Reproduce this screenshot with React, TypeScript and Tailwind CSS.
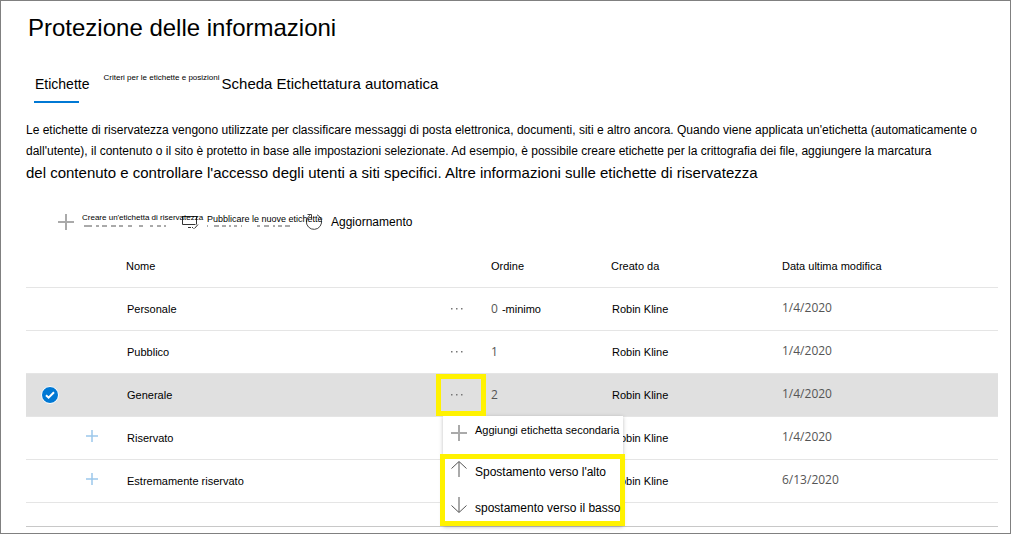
import { useState } from "react";

type Label = {
  name: string;
  order: string;
  note?: string;
  author: string;
  modified: string;
  expandable?: boolean;
};

const labels: Label[] = [
  { name: "Personale", order: "0", note: "-minimo", author: "Robin Kline", modified: "1/4/2020" },
  { name: "Pubblico", order: "1", author: "Robin Kline", modified: "1/4/2020" },
  { name: "Generale", order: "2", author: "Robin Kline", modified: "1/4/2020" },
  { name: "Riservato", order: "", author: "Robin Kline", modified: "1/4/2020", expandable: true },
  { name: "Estremamente riservato", order: "", author: "Robin Kline", modified: "6/13/2020", expandable: true },
];

function PlusIcon({ className }: { className: string }) {
  return (
    <svg viewBox="0 0 16 16" className={className} fill="none" stroke="currentColor" strokeWidth="2" aria-hidden="true">
      <path d="M8 0v16M0 8h16" />
    </svg>
  );
}

function ArrowIcon({ down = false }: { down?: boolean }) {
  return (
    <svg viewBox="0 0 16 16" className="size-4 shrink-0 text-[#555]" fill="none" stroke="currentColor" aria-hidden="true">
      <path d={down ? "M8 0v15" : "M8 16V1"} stroke="#aaa" strokeWidth="2" />
      <path d={down ? "M.5 8.500l7.500 7 7.500-7" : "M.5 7.500l7.500-7 7.500 7"} />
    </svg>
  );
}

function PublishIcon() {
  return (
    <svg viewBox="0 0 18 16" className="h-4 w-[18px] shrink-0 text-[#333]" fill="none" stroke="currentColor" aria-hidden="true">
      <path d="M1.500 3v7.500h13M1 2.500h15M15.500 2v8.500" />
      <path d="M7 13.500h3M11 13l1.500 1.500M13.500 14.500l3.500-4" />
    </svg>
  );
}

function RefreshIcon() {
  return (
    <svg viewBox="0 0 18 18" className="size-[18px] shrink-0 text-[#444]" fill="none" stroke="currentColor" aria-hidden="true">
      <path d="M12 1.800A7.600 7.600 0 1 1 5 2.300" />
      <path d="M2.500 1.500h4v4" />
    </svg>
  );
}

function Residue({ className, d }: { className: string; d: string }) {
  return (
    <svg viewBox="0 0 86 2" className={className} fill="none" stroke="#555" aria-hidden="true">
      <path d={d} />
    </svg>
  );
}

function RowMenu() {
  return (
    <div
      role="menu"
      className="absolute top-full left-px z-10 w-[180px] bg-white text-left text-[12px] text-black shadow-[0_1px_4px_rgba(0,0,0,0.25)]"
    >
      <button role="menuitem" className="flex h-[38px] w-full items-center gap-2 pl-2 text-[11px] whitespace-nowrap">
        <PlusIcon className="mb-1 size-4 shrink-0 text-[#aaa]" />
        <span className="pb-2">Aggiungi etichetta secondaria</span>
      </button>
      <div className="-mx-[3px] h-[72px] w-[185px] border-5 border-[#fff200] pl-1.5">
        <button role="menuitem" className="flex h-5 w-full items-center gap-2 whitespace-nowrap">
          <ArrowIcon />
          <span className="pt-1.5">Spostamento verso l'alto</span>
        </button>
        <button role="menuitem" className="mt-4 flex h-5 w-full items-center gap-2 whitespace-nowrap">
          <ArrowIcon down />
          <span className="pt-1.5">spostamento verso il basso</span>
        </button>
      </div>
    </div>
  );
}

export default function App() {
  const [selected, setSelected] = useState("Generale");

  return (
    <main className="min-h-screen border border-[#808080] bg-white pr-3 pb-[6px] pl-[25px] font-['Liberation_Sans',Arial,sans-serif] text-black">
      <h1 className="pt-[11px] pl-0.5 text-[24px] leading-8">Protezione delle informazioni</h1>

      <nav className="mt-7 flex h-8 items-start pl-2 whitespace-nowrap">
        <a href="#etichette" aria-current="page" className="text-[14px] leading-6">
          <span className="pl-px">Etichette</span>
          <span className="mt-[5px] block h-0.5 w-[45px] bg-[#0078d4]" />
        </a>
        <a href="#criteri" className="ml-3.5 text-[8px] leading-3">
          Criteri per le etichette e posizioni
        </a>
        <a href="#automatica" className="ml-0.5 text-[15px] leading-6">
          Scheda Etichettatura automatica
        </a>
      </nav>

      <p className="mt-4 text-[12px] leading-[21px]">
        Le etichette di riservatezza vengono utilizzate per classificare messaggi di posta elettronica, documenti, siti e
        altro ancora. Quando viene applicata un'etichetta (automaticamente o
        <br />
        dall'utente), il contenuto o il sito è protetto in base alle impostazioni selezionate. Ad esempio, è possibile
        creare etichette per la crittografia dei file, aggiungere la marcatura
        <br />
        <span className="text-[15px]">
          del contenuto e controllare l'accesso degli utenti a siti specifici. Altre informazioni sulle etichette di
          riservatezza
        </span>
      </p>

      <div role="toolbar" aria-label="Azioni etichette" className="mt-[25px] flex h-6 items-center pl-8 whitespace-nowrap">
        <button className="flex h-6 items-center gap-2 text-[8px]">
          <PlusIcon className="size-4 shrink-0 text-[#aaa]" />
          <span className="relative w-[99px] pb-2 text-left">
            Creare un'etichetta di riservatezza
            <Residue
              className="absolute top-[13px] left-0 h-0.5 w-[86px]"
              d="M2 1h8M14 1h3M20 1h5M29 1h5M37 1h4M46 1h4M57 1h4M68 1h3M75 1h4M82 1h2"
            />
          </span>
        </button>
        <button className="flex h-6 items-center gap-2 text-[9px]">
          <PublishIcon />
          <span className="relative w-[98px] pb-1 text-left">
            Pubblicare le nuove etichette
            <Residue
              className="absolute top-3 left-0 h-0.5 w-[86px]"
              d="M0 1h1M7 1h5M15 1h4M22 1h2M27 1h3M34 1h1M50 1h3M57 1h5M66 1h2M71 1h4M78 1h5"
            />
          </span>
        </button>
        <button className="flex h-6 items-center gap-2 text-[12px]">
          <RefreshIcon />
          Aggiornamento
        </button>
      </div>

      <div className="border-b border-[#c8c8c8] pb-[23px]">
        <table className="mt-2.5 w-full table-fixed border-collapse text-left text-[11px]">
          <colgroup>
            <col className="w-[52px]" />
            <col className="w-12" />
            <col />
            <col className="w-[49px]" />
            <col className="w-[120px]" />
            <col className="w-[171px]" />
            <col className="w-[216px]" />
          </colgroup>
          <thead>
            <tr className="h-[43px] border-b border-[#e5e5e5]">
              <th aria-label="Selezione" />
              <th aria-label="Espandi" />
              <th className="p-0 pt-0.5 font-normal">Nome</th>
              <th aria-label="Azioni" />
              <th className="p-0 pt-0.5 font-normal">Ordine</th>
              <th className="p-0 pt-0.5 font-normal">Creato da</th>
              <th className="p-0 pt-0.5 font-normal">Data ultima modifica</th>
            </tr>
          </thead>
          <tbody>
            {labels.map((label) => {
              const active = label.name === selected;
              return (
                <tr
                  key={label.name}
                  onClick={() => setSelected(label.name)}
                  className={active ? "h-[43px] border-b border-[#e5e5e5] bg-[#e0e0e0]" : "h-[43px] border-b border-[#e5e5e5]"}
                >
                  <td className="p-0 pl-[15px]">
                    {active && (
                      <label className="grid size-[18px] place-items-center">
                        <input
                          type="checkbox"
                          checked
                          readOnly
                          aria-label={`Seleziona ${label.name}`}
                          className="col-start-1 row-start-1 size-[18px] appearance-none rounded-full border border-white bg-[#0078d4]"
                        />
                        <svg viewBox="0 0 10 10" className="pointer-events-none col-start-1 row-start-1 size-2.5" fill="none" stroke="white" strokeWidth="2" aria-hidden="true">
                          <path d="M1 5.200l2.600 2.500L9 2.300" />
                        </svg>
                      </label>
                    )}
                  </td>
                  <td className="p-0 pb-1 pl-2">
                    {label.expandable && (
                      <button aria-label={`Espandi ${label.name}`} className="block">
                        <PlusIcon className="size-3 text-[#9cc8eb]" />
                      </button>
                    )}
                  </td>
                  <td className="p-0 pt-0.5 pl-px">{label.name}</td>
                  <td className="relative p-0">
                    <button aria-label={`Altre azioni per ${label.name}`} className="flex h-4 items-center pl-[9px] text-[#777]">
                      <svg viewBox="0 0 12 2" className="h-0.5 w-3" fill="currentColor" aria-hidden="true">
                        <path d="M0 0h1.500v1.500H0zM5 0h1.500v1.500H5zM10 0h1.500v1.500H10z" />
                      </svg>
                    </button>
                    {active && (
                      <>
                        <span className="pointer-events-none absolute top-0 -left-1.5 z-20 h-[42px] w-[50px] border-5 border-[#fff200]" />
                        <RowMenu />
                      </>
                    )}
                  </td>
                  <td className="p-0">
                    <span className="mr-1 font-['Open_Sans',sans-serif] text-[12px] text-[#555]">{label.order}</span>
                    {label.note}
                  </td>
                  <td className="p-0 pt-0.5 pl-px">{label.author}</td>
                  <td className="p-0 pb-0.5 font-['Open_Sans',sans-serif] text-[12px] text-[#555]">{label.modified}</td>
                </tr>
              );
            })}
          </tbody>
        </table>
      </div>
    </main>
  );
}
